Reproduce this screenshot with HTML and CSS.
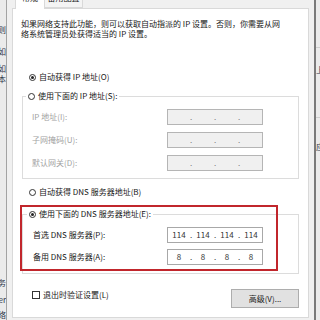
FILE: index.html
```html
<!DOCTYPE html>
<html lang="zh-CN">
<head>
    <meta charset="UTF-8">
    <title>IPv4 属性</title>
    <link rel="stylesheet" href="styles.css">
</head>
<body>
    <div class="screen">
        <!-- window behind, left edge -->
        <div class="behind-left">
            <span class="frag f1">规则</span>
            <span class="frag f2">如</span>
            <span class="frag f3">如</span>
            <span class="frag f4">本</span>
            <span class="frag f5">服务</span>
            <span class="frag f6">Ser</span>
            <span class="frag f7">网络</span>
        </div>

        <div class="dialog">
            <div class="tabs">
                <div class="tab active">常规</div>
                <div class="tab">备用配置</div>
            </div>

            <div class="panel">
                <p class="intro">如果网络支持此功能，则可以获取自动指派的 IP 设置。否则，你需要从网<br>络系统管理员处获得适当的 IP 设置。</p>

                <div class="radio radio-top">
                    <span class="radio-dot checked"></span>
                    <span>自动获得 IP 地址(O)</span>
                </div>

                <div class="group group-ip">
                    <div class="radio legend">
                        <span class="radio-dot"></span>
                        <span>使用下面的 IP 地址(S):</span>
                    </div>
                    <div class="rows">
                        <span class="label disabled">IP 地址(I):</span>
                        <div class="ip off"><span></span><span>.</span><span></span><span>.</span><span></span><span>.</span><span></span></div>
                        <span class="label disabled">子网掩码(U):</span>
                        <div class="ip off"><span></span><span>.</span><span></span><span>.</span><span></span><span>.</span><span></span></div>
                        <span class="label disabled">默认网关(D):</span>
                        <div class="ip off"><span></span><span>.</span><span></span><span>.</span><span></span><span>.</span><span></span></div>
                    </div>
                </div>

                <div class="radio radio-dns">
                    <span class="radio-dot"></span>
                    <span>自动获得 DNS 服务器地址(B)</span>
                </div>

                <div class="group group-dns">
                    <div class="radio legend">
                        <span class="radio-dot checked"></span>
                        <span>使用下面的 DNS 服务器地址(E):</span>
                    </div>
                    <div class="rows">
                        <span class="label">首选 DNS 服务器(P):</span>
                        <div class="ip"><span>114</span><span>.</span><span>114</span><span>.</span><span>114</span><span>.</span><span>114</span></div>
                        <span class="label">备用 DNS 服务器(A):</span>
                        <div class="ip"><span>8</span><span>.</span><span>8</span><span>.</span><span>8</span><span>.</span><span>8</span></div>
                    </div>
                </div>

                <div class="footer">
                    <label class="check">
                        <span class="check-box"></span>
                        <span>退出时验证设置(L)</span>
                    </label>
                    <button class="btn">高级(V)...</button>
                </div>

                <!-- red highlight drawn over the screenshot -->
                <div class="highlight"></div>
            </div>
        </div>

        <!-- window behind, right edge -->
        <div class="behind-right">
            <div class="rule r1"></div>
            <span class="frag g1">上</span>
            <div class="rule r2"></div>
            <span class="frag g2">应</span>
        </div>
    </div>
</body>
</html>
```

FILE: styles.css
```css
* {
    box-sizing: border-box;
}

body {
    margin: 0;
    width: 320px;
    height: 320px;
    overflow: hidden;
    background: #ebebeb;
    font-family: "Noto Sans CJK SC", "Noto Sans", sans-serif;
    font-size: 8px;
    line-height: 10px;
    color: #161616;
}

.screen {
    display: flex;
    height: 320px;
}

/* Windows behind the dialog */
.behind-left {
    width: 6px;
    overflow: hidden;
    display: flex;
    flex-direction: column;
    align-items: flex-end;
    color: #2d3448;
}

.behind-right {
    width: 4px;
    overflow: hidden;
    display: flex;
    flex-direction: column;
    color: #2d3448;
}

.frag {
    white-space: nowrap;
    height: 10px;
}

.f1 { margin-top: 25px; }
.f2 { margin-top: 12px; }
.f3 { margin-top: 7px; }
.f4 { margin-top: 0; }
.f5 { margin-top: 194px; }
.f6 { margin-top: 7px; }
.f7 { margin-top: 5px; }

.rule {
    height: 1px;
    background: #cfcfcf;
    flex-shrink: 0;
}

.r1 { margin-top: 47px; }
.g1 { margin-top: 17px; }
.r2 { margin-top: 42px; }
.g2 { margin-top: 24px; }

/* Dialog */
.dialog {
    width: 310px;
    background: #f0f0f0;
    border-left: 1px solid #a3a3a3;
    border-right: 2px solid #7a7a7a;
    padding: 0 5px;
    display: flex;
    flex-direction: column;
}

.tabs {
    height: 8px;
    display: flex;
    padding-left: 3px;
}

.tab {
    height: 16px;
    margin-top: -8px;
    line-height: 11px;
    text-align: center;
    background: #f4f4f4;
    border: 1px solid #d9d9d9;
    border-top: none;
    width: 39px;
}

.tab.active {
    width: 29px;
    height: 17px;
    background: #fff;
    border-bottom: none;
    border-right: none;
    position: relative;
    z-index: 1;
}

.panel {
    height: 310px;
    background: #fff;
    border: 1px solid #d9d9d9;
    padding-top: 10px;
    position: relative;
}

.intro {
    margin: 0 0 0 8px;
    white-space: nowrap;
}

/* Radios and checkbox */
.radio {
    display: flex;
    align-items: center;
    gap: 3px;
    height: 10px;
    white-space: nowrap;
}

.radio-dot {
    width: 7px;
    height: 7px;
    border: 1px solid #333;
    border-radius: 50%;
    background: #fff;
    display: flex;
    align-items: center;
    justify-content: center;
}

.radio-dot.checked::after {
    content: "";
    width: 3px;
    height: 3px;
    border-radius: 50%;
    background: #222;
}

.radio-top { margin: 33px 0 0 16px; }
.radio-dns { margin: 8px 0 0 16px; }

/* Group boxes */
.group {
    margin: 0 9px 0 9px;
    border: 1px solid #dcdcdc;
}

.group-ip {
    margin-top: 14px;
    padding-bottom: 7px;
}

.group-dns {
    margin-top: 17px;
    padding-bottom: 8px;
}

.legend {
    width: fit-content;
    margin-top: -6px;
    margin-left: 3px;
    padding: 0 2px;
    background: #fff;
}

.group-dns .legend { margin-left: 4px; }

.rows {
    display: grid;
    grid-template-columns: 135px 96px;
    grid-auto-rows: 16px;
    row-gap: 7px;
    align-items: center;
    margin-top: 8px;
    padding-left: 9px;
}

.group-dns .rows {
    grid-template-columns: 134px 96px;
    row-gap: 6px;
    padding-left: 10px;
}

.label {
    white-space: nowrap;
}

.label.disabled {
    color: #a2a2a2;
}

/* IP address fields */
.ip {
    height: 16px;
    border: 1px solid #a8a8a8;
    background: #fff;
    color: #333;
    display: grid;
    grid-template-columns: 1fr 4px 1fr 4px 1fr 4px 1fr;
    align-items: center;
    text-align: center;
    padding: 0 1px;
    line-height: 14px;
}

.ip.off {
    background: #f0f0f0;
    border-color: #b5b5b5;
    color: #7a7a7a;
}

/* Footer */
.footer {
    display: flex;
    justify-content: space-between;
    align-items: flex-start;
    margin: 15px 9px 0 19px;
}

.check {
    display: flex;
    align-items: center;
    gap: 3px;
    height: 10px;
    margin-top: 1px;
}

.check-box {
    width: 8px;
    height: 8px;
    border: 1px solid #333;
    background: #fff;
}

.btn {
    width: 68px;
    height: 19px;
    padding: 0;
    background: #e1e1e1;
    border: 1px solid #adadad;
    font-family: inherit;
    font-size: 8px;
    line-height: 17px;
    color: #1b1b1b;
}

/* Annotation */
.highlight {
    position: absolute;
    left: 7px;
    top: 196px;
    width: 258px;
    height: 66px;
    border: 2px solid #c1262c;
}
```
